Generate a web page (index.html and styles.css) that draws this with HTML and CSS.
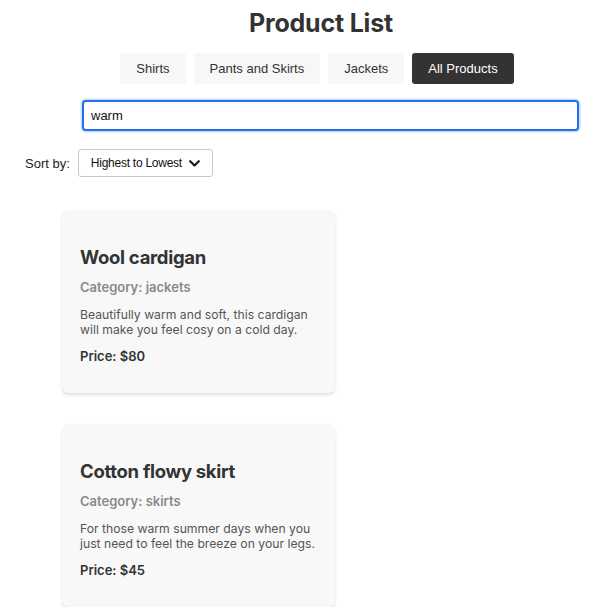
FILE: index.html
```html
<!DOCTYPE html>
<html lang="en">
<head>
<meta charset="utf-8">
<title>Product List</title>
<link rel="stylesheet" href="styles.css">
</head>
<body>
<div class="page">
  <h1 class="title">Product List</h1>
  <nav class="filters">
    <button class="filter">Shirts</button>
    <button class="filter">Pants and Skirts</button>
    <button class="filter">Jackets</button>
    <button class="filter active">All Products</button>
  </nav>
  <div class="search">
    <input class="search-input" type="text" value="warm">
  </div>
  <div class="sort">
    <label class="sort-label" for="sort">Sort by:</label>
    <span class="select-wrap">
      <select id="sort" class="sort-select">
        <option>Highest to Lowest</option>
        <option>Lowest to Highest</option>
      </select>
      <svg class="chevron" width="11" height="7" viewBox="0 0 11 7"><path d="M1.2 1.2 L5.5 5.5 L9.8 1.2" fill="none" stroke="#1a1a1a" stroke-width="2.2" stroke-linecap="round" stroke-linejoin="round"/></svg>
    </span>
  </div>
  <div class="list">
    <article class="card">
      <h2 class="card-title">Wool cardigan</h2>
      <p class="card-cat">Category: jackets</p>
      <p class="card-desc">Beautifully warm and soft, this cardigan will make you feel cosy on a cold day.</p>
      <p class="card-price">Price: $80</p>
    </article>
    <article class="card">
      <h2 class="card-title">Cotton flowy skirt</h2>
      <p class="card-cat">Category: skirts</p>
      <p class="card-desc">For those warm summer days when you just need to feel the breeze on your legs.</p>
      <p class="card-price">Price: $45</p>
    </article>
  </div>
</div>
</body>
</html>
```
FILE: styles.css
```css
* { box-sizing: border-box; }
html, body { margin: 0; padding: 0; background: #fff; }
body { font-family: Inter, "Liberation Sans", Arial, sans-serif; color: #333; }

.page { display: flex; flex-direction: column; }

.title {
  margin: 7px 0 0;
  padding-left: 36px;
  text-align: center;
  font-family: Inter, sans-serif;
  font-weight: 700;
  font-size: 25px;
  letter-spacing: -0.2px;
  line-height: 32px;
  color: #333;
}

.filters {
  display: flex;
  justify-content: center;
  padding-left: 36px;
  margin-top: 14px;
}
.filter {
  height: 31px;
  margin-right: 8px;
  padding: 0 16px;
  border: none;
  border-radius: 3px;
  background: #f7f7f7;
  color: #333;
  font-family: "Liberation Sans", Arial, sans-serif;
  font-size: 13px;
}
.filter.active { background: #333; color: #fff; }

.search {
  padding: 0 27px 0 82px;
  margin-top: 16px;
}
.search-input {
  display: block;
  width: 100%;
  height: 31px;
  padding: 0 7px;
  border: 2px solid #2170ea;
  border-radius: 4px;
  box-shadow: 0 0 0 1.5px #c9dcfb;
  outline: none;
  font-family: "Liberation Sans", Arial, sans-serif;
  font-size: 13px;
  color: #111;
}

.sort {
  display: flex;
  align-items: center;
  margin-top: 18px;
  padding-left: 25px;
}
.sort-label {
  font-family: "Liberation Sans", Arial, sans-serif;
  font-size: 13px;
  color: #222;
  margin-right: 8px;
}
.select-wrap { position: relative; display: inline-block; }
.sort-select {
  appearance: none;
  -webkit-appearance: none;
  width: 135px;
  height: 28px;
  padding: 0 0 0 12px;
  border: 1px solid #c8c8c8;
  border-radius: 3px;
  background: #fff;
  font-family: "Liberation Sans", Arial, sans-serif;
  font-size: 12px;
  letter-spacing: -0.25px;
  color: #111;
}
.chevron { position: absolute; right: 13px; top: 11px; pointer-events: none; }

.list {
  display: flex;
  flex-direction: column;
  gap: 31px;
  padding-left: 62px;
  margin-top: 33px;
}
.card {
  width: 273px;
  height: 183px;
  padding: 35px 14px 18px 18px;
  border-radius: 6px;
  background: #f8f8f8;
  box-shadow: 0 2px 3px rgba(0,0,0,0.12);
}
.card-title {
  margin: 0;
  font-size: 18.5px;
  letter-spacing: -0.3px;
  line-height: 24px;
  font-weight: 700;
  color: #333;
}
.card-cat {
  margin: 10px 0 0;
  font-size: 13px;
  line-height: 16px;
  font-weight: 600;
  color: #8a8a8a;
}
.card-desc {
  margin: 12px 0 0;
  font-size: 12.2px;
  line-height: 15px;
  color: #555;
}
.card-price {
  margin: 11px 0 0;
  font-size: 13px;
  line-height: 16px;
  font-weight: 600;
  color: #333;
}
```
